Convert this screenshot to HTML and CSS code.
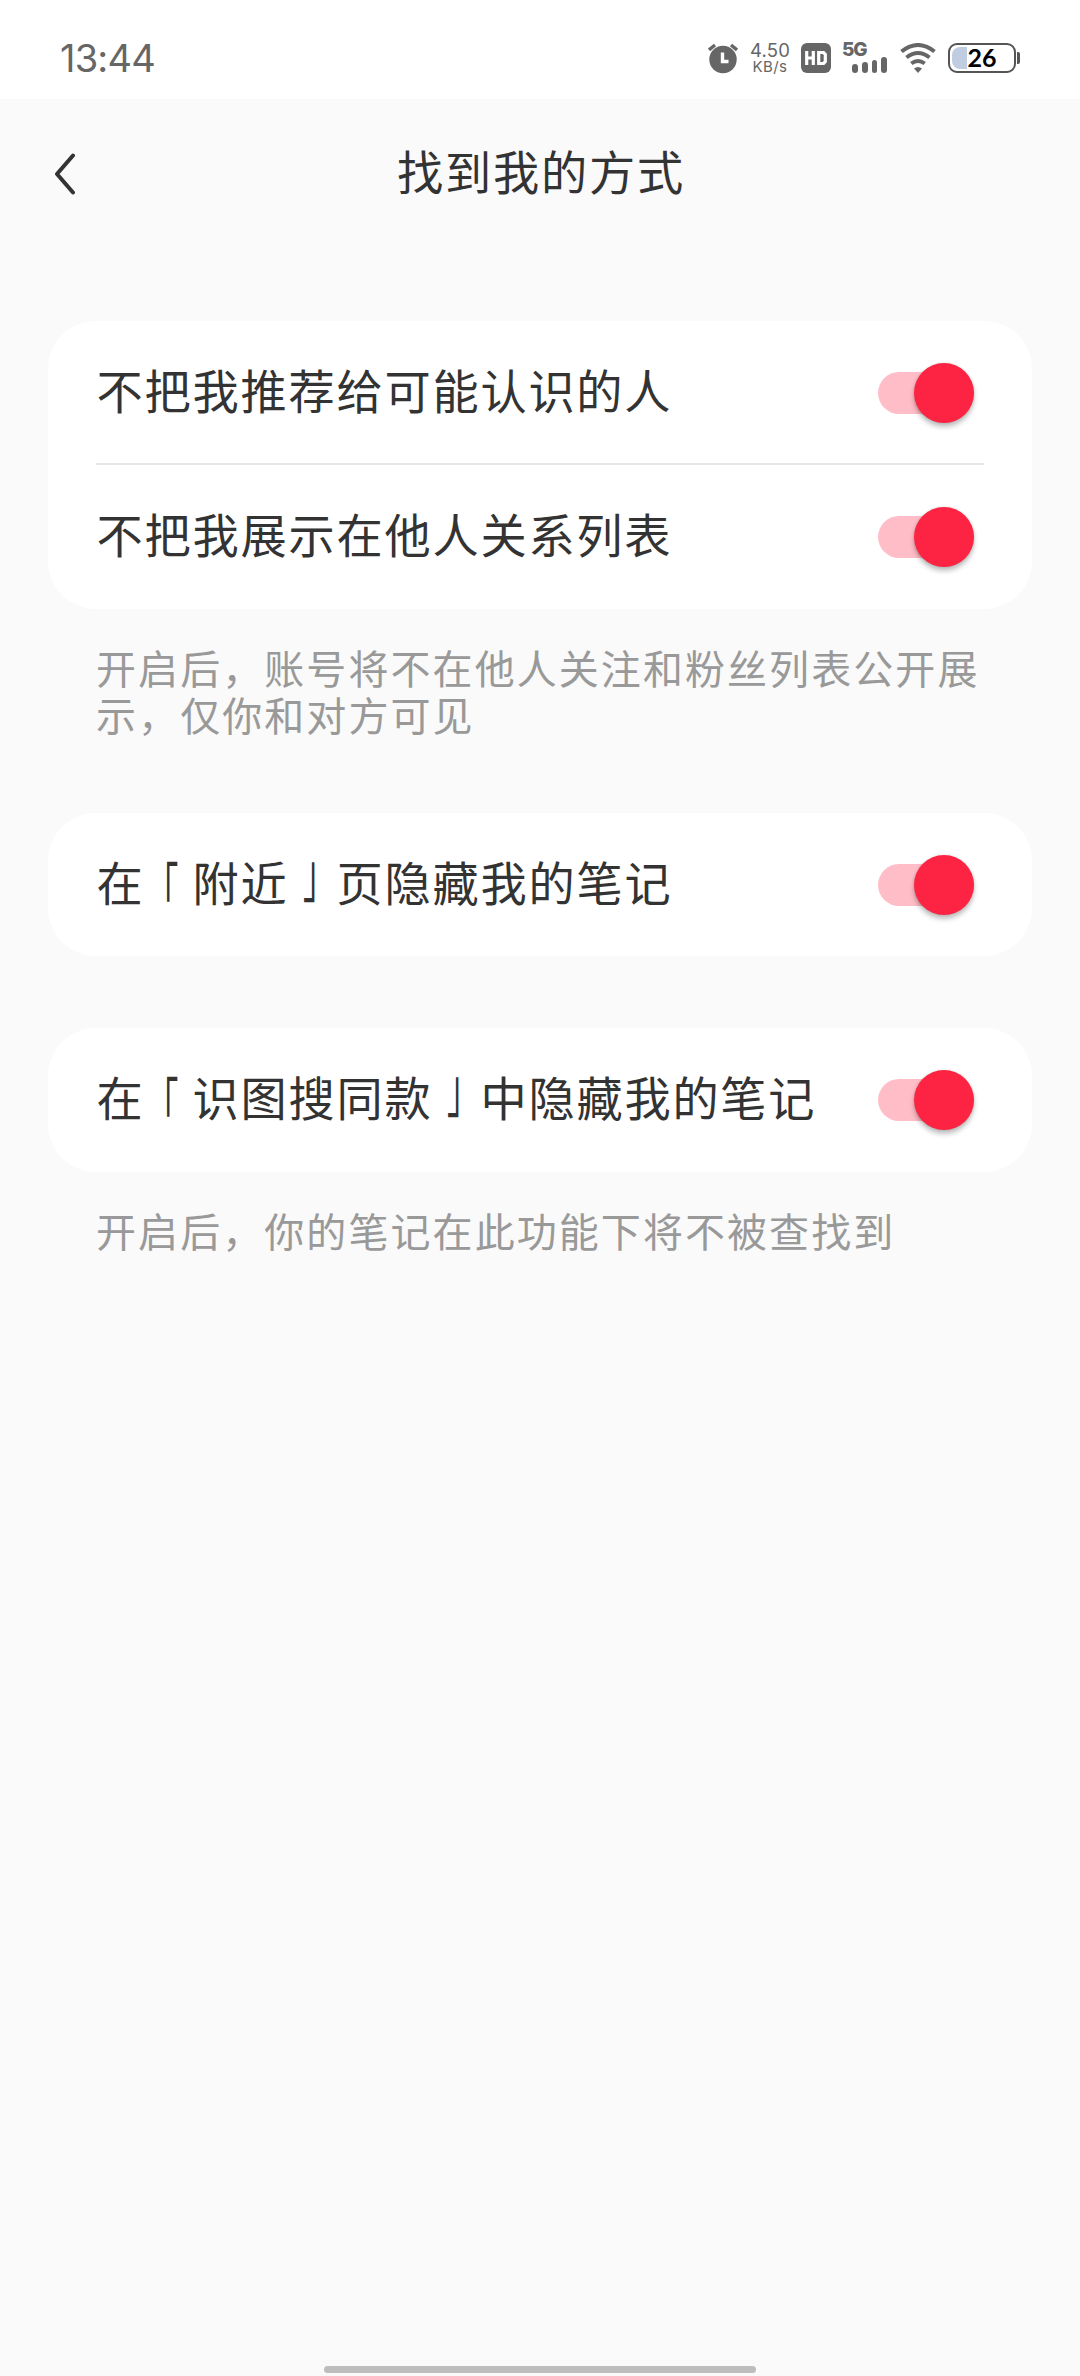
FILE: index.html
```html
<!DOCTYPE html>
<html lang="zh-CN">
<head>
<meta charset="utf-8">
<title>找到我的方式</title>
<link rel="stylesheet" href="styles.css">
</head>
<body>
<div class="screen">
  <header class="status">
    <span class="clock">13:44</span>
    <div class="indicators">
      <svg class="alarm" width="30" height="31" viewBox="0 0 30 31">
        <circle cx="15" cy="16.5" r="13.7" fill="#666"/>
        <path d="M1 7L7 2M29 7L23 2" stroke="#666" stroke-width="3.4" fill="none"/>
        <path d="M14.5 9.5V18.5H20.5" stroke="#fff" stroke-width="3.4" fill="none"/>
      </svg>
      <div class="speed"><span class="rate">4.50</span><span class="unit">KB/s</span></div>
      <span class="hd"><svg width="22" height="14" viewBox="0 0 22 14"><path d="M1.7 0V14M8.3 0V14M2 7H8M13.7 1.5H18.5L20.3 3.3V10.7L18.5 12.5H13.7Z" fill="none" stroke="#fff" stroke-width="3.2"/></svg></span>
      <div class="signal">
        <span class="net">5G</span>
        <div class="bars"><i class="bar b1"></i><i class="bar b2"></i><i class="bar b3"></i><i class="bar b4"></i></div>
      </div>
      <svg class="wifi" width="36" height="30" viewBox="0 0 36 30">
        <g fill="none" stroke="#666" stroke-width="4">
          <path d="M1.5 8.5Q18 -4.5 34.5 8.5"/>
          <path d="M6.5 14.5Q18 5.500 29.5 14.5"/>
          <path d="M11.3 20.5Q18 15.5 24.7 20.5"/>
        </g>
        <path d="M14 25.5Q18 22.5 22 25.5L18 30Z" fill="#666"/>
      </svg>
      <div class="battery"><div class="cell"><i class="charge"></i><span class="level">26</span></div><i class="cap"></i></div>
    </div>
  </header>
  <nav class="titlebar">
    <svg class="back" width="22" height="42" viewBox="0 0 22 42"><path d="M19 2.5L3 21L19 39.5" fill="none" stroke="#333" stroke-width="4" stroke-linecap="round" stroke-linejoin="round"/></svg>
    <h1 class="title">找到我的方式</h1>
  </nav>
  <main class="content">
    <section class="card">
      <div class="row"><span class="label">不把我推荐给可能认识的人</span><span class="switch"><i class="knob"></i></span></div>
      <div class="row ruled"><span class="label">不把我展示在他人关系列表</span><span class="switch"><i class="knob"></i></span></div>
    </section>
    <p class="note">开启后，账号将不在他人关注和粉丝列表公开展示，仅你和对方可见</p>
    <section class="card nearby">
      <div class="row"><span class="label">在<span class="open">「</span>附近<span class="close">」</span>页隐藏我的笔记</span><span class="switch"><i class="knob"></i></span></div>
    </section>
    <section class="card similar">
      <div class="row"><span class="label">在<span class="open">「</span>识图搜同款<span class="close">」</span>中隐藏我的笔记</span><span class="switch"><i class="knob"></i></span></div>
    </section>
    <p class="note">开启后，你的笔记在此功能下将不被查找到</p>
  </main>
  <footer class="home"><i class="handle"></i></footer>
</div>
</body>
</html>
```
FILE: styles.css
```css
* { box-sizing: border-box; }
body { margin: 0; background: #fafafa; font-family: "Noto Sans CJK SC", sans-serif; color: #333; }
i { display: block; }
svg { display: block; flex: none; }
.screen { width: 1080px; height: 2376px; display: flex; flex-direction: column; }

.status { height: 99px; background: #fff; display: flex; justify-content: space-between; padding: 0 60px; color: #666; }
.clock { font: 38px/116px Inter, sans-serif; letter-spacing: -0.8px; }
.indicators { display: flex; align-items: flex-start; padding-top: 43px; }
.speed { margin-left: 12px; width: 40px; display: flex; flex-direction: column; align-items: center; }
.rate { font: 18.5px/14px Inter, sans-serif; letter-spacing: .2px; }
.unit { font: 15px/14px Inter, sans-serif; margin-top: 3px; letter-spacing: .4px; }
.hd { width: 30px; height: 30px; margin-left: 11px; border-radius: 6px; background: #666; display: flex; align-items: center; justify-content: center; }
.signal { width: 45px; height: 30px; margin-left: 11px; display: grid; }
.net { grid-area: 1 / 1; font: 800 19px/14px Inter, sans-serif; letter-spacing: -1.2px; }
.bars { grid-area: 1 / 1; display: flex; gap: 4px; align-items: flex-end; justify-content: flex-end; }
.bar { width: 5.7px; border-radius: 3px; background: #666; }
.b1 { height: 9px; }
.b2 { height: 11px; }
.b3 { height: 13px; }
.b4 { height: 16px; }
.wifi { margin-left: 13px; }
.battery { display: flex; align-items: center; margin-left: 12px; }
.cell { width: 68px; height: 30px; border: 2px solid #555; border-radius: 9px; display: grid; align-items: center; padding: 0 2px; }
.charge { grid-area: 1 / 1; width: 15px; height: 22px; border-radius: 8px 0 0 8px; background: #c0cde0; }
.level { grid-area: 1 / 1; text-align: center; font: 700 25px/24px Lato, sans-serif; color: #000; margin-top: -2px; }
.cap { width: 3px; height: 12px; margin-left: 1px; background: #555; border-radius: 0 2px 2px 0; }

.titlebar { height: 150px; display: grid; grid-template-columns: 54px 1fr 54px; align-items: center; }
.back { margin-left: 54px; }
.title { margin: 0; padding: 0 0 9px 2px; font-size: 46.2px; line-height: 66px; font-weight: 400; letter-spacing: 1.8px; text-align: center; }

.content { flex: 1; padding: 72px 48px 0; }
.card { background: #fff; border-radius: 48px; padding: 0 48px; }
.row { height: 144px; display: flex; align-items: center; justify-content: space-between; padding-right: 10px; }
.ruled { position: relative; }
.ruled::before { content: ""; position: absolute; left: 0; right: 0; top: -2px; height: 2px; background: #e6e6e6; }
.label { padding: 0 0 8px .5px; font-size: 46.2px; line-height: 66px; letter-spacing: 1.8px; white-space: nowrap; }
/* tall, narrow corner brackets */
.open, .close { display: inline-block; }
.open { transform: translate(-6.3px, 6px) scale(.7, 1.33); }
.close { transform: translate(7.7px, -11px) scale(.7, 1.33); }
.switch { width: 96px; height: 42px; border-radius: 21px; background: #ffbdc7; display: flex; align-items: center; justify-content: flex-end; }
.knob { width: 60px; height: 60px; flex: none; border-radius: 50%; background: #fc2442; box-shadow: 0 4px 5px rgba(0, 0, 0, .25), 0 0 3px rgba(0, 0, 0, .12); }
.note { margin: 35px 48px 0; font-size: 40px; line-height: 47px; letter-spacing: 2.07px; color: #999; word-break: break-all; }
.nearby { margin-top: 75px; }
.nearby .row { height: 143px; }
.similar { margin-top: 72px; }
.home { display: flex; justify-content: center; padding-bottom: 3px; }
.handle { width: 432px; height: 7px; border-radius: 4px; background: #bdbdbd; }
```
